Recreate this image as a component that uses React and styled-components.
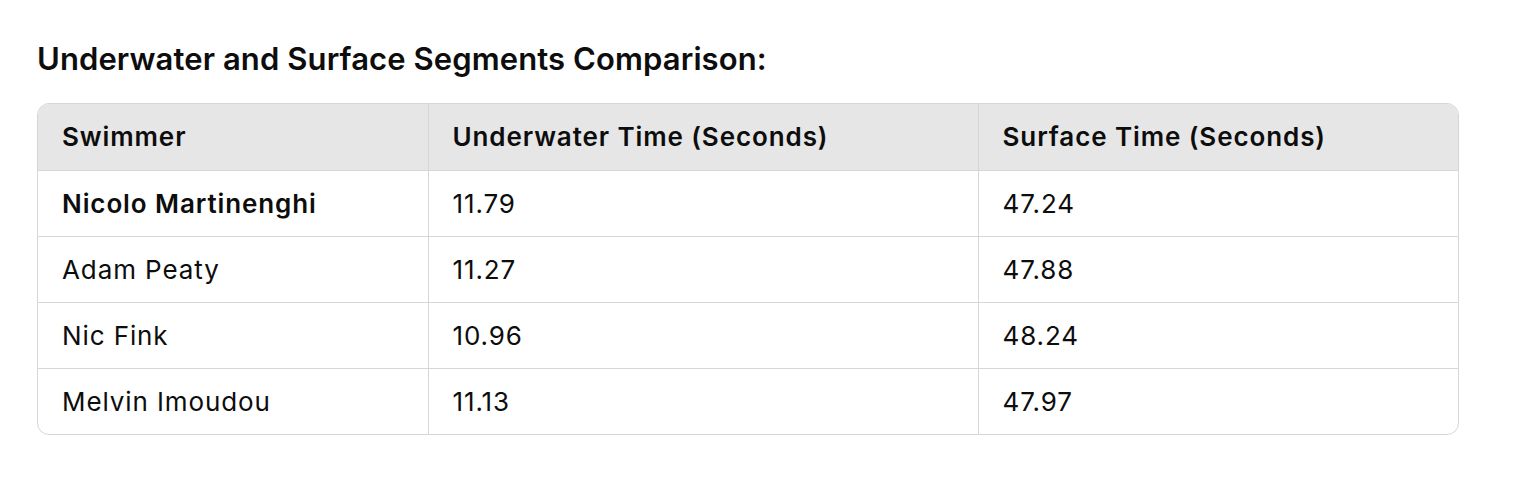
import React from "react";
import styled, { createGlobalStyle } from "styled-components";

const GlobalStyle = createGlobalStyle`
  body {
    margin: 0;
    background: #ffffff;
    font-family: Inter, "Noto Sans", "Liberation Sans", sans-serif;
    color: #0d0d0d;
  }
`;

const rows = [
  { name: "Nicolo Martinenghi", under: "11.79", surface: "47.24", bold: true },
  { name: "Adam Peaty", under: "11.27", surface: "47.88" },
  { name: "Nic Fink", under: "10.96", surface: "48.24" },
  { name: "Melvin Imoudou", under: "11.13", surface: "47.97" },
];

const App = () => {
  return (
    <StPage>
      <GlobalStyle />
      <StTitle>Underwater and Surface Segments Comparison:</StTitle>
      <StTableWrap>
        <StTable>
          <colgroup>
            <col style={{ width: 390 }} />
            <col style={{ width: 550 }} />
            <col />
          </colgroup>
          <thead>
            <tr>
              <StHead>Swimmer</StHead>
              <StHead>Underwater Time (Seconds)</StHead>
              <StHead>Surface Time (Seconds)</StHead>
            </tr>
          </thead>
          <tbody>
            {rows.map((r) => (
              <tr key={r.name}>
                <StCell>{r.bold ? <strong>{r.name}</strong> : r.name}</StCell>
                <StCell>{r.under}</StCell>
                <StCell>{r.surface}</StCell>
              </tr>
            ))}
          </tbody>
        </StTable>
      </StTableWrap>
    </StPage>
  );
};

export default App;

const StPage = styled.div`
  padding: 40px 55px 0 37px;
  width: 1422px;
`;
const StTitle = styled.h3`
  margin: 0 0 25px;
  font-size: 31px;
  line-height: 38px;
  font-weight: 600;
  letter-spacing: 0.1px;
`;
const StTableWrap = styled.div`
  border: 1.5px solid #d6d6d6;
  border-radius: 12px;
  overflow: hidden;
`;
const StTable = styled.table`
  width: 100%;
  border-collapse: collapse;
  table-layout: fixed;
  font-size: 26px;
  line-height: 37px;
  letter-spacing: 0.9px;

  strong {
    font-weight: 600;
  }

  tr > *:not(:last-child) {
    border-right: 1.5px solid #d6d6d6;
  }
  tbody tr:not(:last-child) > td,
  thead th {
    border-bottom: 1.5px solid #d6d6d6;
  }
`;
const StHead = styled.th`
  background: #e6e6e6;
  text-align: left;
  font-weight: 600;
  padding: 14px 24px 15px;
`;
const StCell = styled.td`
  padding: 14px 24px;
`;
